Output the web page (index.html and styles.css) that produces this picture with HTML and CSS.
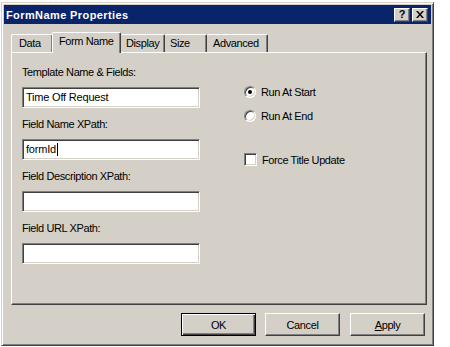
FILE: index.html
```html
<!DOCTYPE html>
<html lang="en">
<head>
    <meta charset="UTF-8">
    <title>FormName Properties</title>
    <link rel="stylesheet" href="styles.css">
</head>
<body>
    <div class="window">
        <div class="titlebar">
            <span class="title">FormName Properties</span>
            <div class="title-buttons">
                <span class="tbtn">?</span>
                <span class="tbtn close">
                    <svg width="8" height="7" viewBox="0 0 8 7">
                        <path d="M0 0h2l2 2.5 2-2.5h2l-3 3.5 3 3.5h-2l-2-2.5-2 2.5h-2l3-3.5z" fill="#000"/>
                    </svg>
                </span>
            </div>
        </div>

        <div class="tabs">
            <span class="tab tab-data">Data</span>
            <span class="tab tab-active">Form Name</span>
            <span class="tab tab-display">Display</span>
            <span class="tab tab-size">Size</span>
            <span class="tab tab-adv">Advanced</span>
        </div>

        <div class="panel">
            <div class="col-left">
                <label class="field-label">Template Name &amp; Fields:</label>
                <div class="textbox">Time Off Request</div>

                <label class="field-label">Field Name XPath:</label>
                <div class="textbox">formId<span class="caret"></span></div>

                <label class="field-label">Field Description XPath:</label>
                <div class="textbox"></div>

                <label class="field-label">Field URL XPath:</label>
                <div class="textbox"></div>
            </div>

            <div class="col-right">
                <div class="option"><span class="radio checked"></span>Run At Start</div>
                <div class="option"><span class="radio"></span>Run At End</div>
                <div class="option option-check"><span class="checkbox"></span>Force Title Update</div>
            </div>
        </div>

        <div class="actions">
            <span class="btn btn-default"><span>OK</span></span>
            <span class="btn"><span>Cancel</span></span>
            <span class="btn btn-apply"><span><u>A</u>pply</span></span>
        </div>
    </div>
</body>
</html>
```

FILE: styles.css
```css
body {
    margin: 0;
    background-color: #ffffff;
    font-family: "Liberation Sans", Arial, sans-serif;
    font-size: 11px;
    letter-spacing: -0.4px;
    color: #000;
}

.window {
    box-sizing: border-box;
    width: 433px;
    height: 344px;
    margin: 2px 0 0 1px;
    padding: 1px;
    background-color: #d4d0c8;
    border: 1px solid;
    border-color: #d4d0c8 #404040 #404040 #d4d0c8;
    box-shadow: inset 1px 1px 0 #ffffff, inset -1px -1px 0 #808080;
    display: flex;
    flex-direction: column;
}

.titlebar {
    height: 19px;
    margin: 1px 1px 0 1px;
    background-color: #0a246a;
    display: flex;
    align-items: center;
    justify-content: space-between;
    padding: 0 3px 0 2px;
}

.title {
    color: #fff;
    font-weight: bold;
    letter-spacing: 0.4px;
}

.title-buttons {
    display: flex;
}

.tbtn {
    box-sizing: border-box;
    width: 16px;
    height: 14px;
    background-color: #d4d0c8;
    border: 1px solid;
    border-color: #ffffff #404040 #404040 #ffffff;
    box-shadow: inset -1px -1px 0 #808080;
    display: flex;
    align-items: center;
    justify-content: center;
    font-weight: bold;
    font-size: 11px;
    letter-spacing: 0;
    line-height: 1;
}

.close {
    margin-left: 2px;
}

/* tabs */
.tabs {
    display: flex;
    align-items: flex-end;
    height: 20px;
    margin: 8px 0 0 8px;
    position: relative;
    z-index: 1;
}

.tab {
    box-sizing: border-box;
    height: 18px;
    padding: 2px 0 0 7px;
    border-top: 1px solid #ffffff;
    border-left: 1px solid #ffffff;
    border-right: 1px solid #404040;
    box-shadow: inset -1px 0 0 #808080;
    border-radius: 2px 2px 0 0;
}

.tab-data { width: 42px; }
.tab-display { width: 44px; padding-left: 5px; border-left: none; }
.tab-size { width: 42px; padding-left: 5px; border-left: none; }
.tab-adv { width: 61px; padding-left: 6px; border-left: none; }

.tab-active {
    width: 69px;
    height: 21px;
    margin: 0 0 -1px -1px;
    padding: 2px 0 0 6px;
    background-color: #d4d0c8;
}

.panel {
    box-sizing: border-box;
    height: 253px;
    margin: 0 5px 0 8px;
    padding: 13px 0 0 10px;
    border: 1px solid;
    border-color: #ffffff #404040 #404040 #ffffff;
    box-shadow: inset -1px -1px 0 #808080;
    display: flex;
    gap: 44px;
}

.col-left {
    width: 178px;
    display: flex;
    flex-direction: column;
}

.field-label {
    height: 13px;
    line-height: 13px;
    margin-bottom: 8px;
}

.textbox {
    box-sizing: border-box;
    height: 21px;
    margin-bottom: 10px;
    padding: 2px 0 0 3px;
    line-height: 15px;
    background-color: #ffffff;
    border: 1px solid;
    border-color: #808080 #ffffff #ffffff #808080;
    box-shadow: inset 1px 1px 0 #404040, inset -1px -1px 0 #d4d0c8;
    letter-spacing: -0.2px;
}

.caret {
    display: inline-block;
    width: 1px;
    height: 13px;
    margin-left: 1px;
    vertical-align: -3px;
    background-color: #000;
}

.col-right {
    padding-top: 19px;
    display: flex;
    flex-direction: column;
}

.option {
    display: flex;
    align-items: center;
    height: 13px;
    margin-bottom: 11px;
    gap: 5px;
}

.option-check {
    margin-top: 20px;
}

.radio {
    box-sizing: border-box;
    width: 12px;
    height: 12px;
    border-radius: 50%;
    background-color: #ffffff;
    border: 1px solid;
    border-color: #808080 #ffffff #ffffff #808080;
    box-shadow: inset 1px 1px 0 #404040, inset -1px -1px 0 #d4d0c8;
    display: flex;
    align-items: center;
    justify-content: center;
}

.radio.checked::after {
    content: "";
    width: 4px;
    height: 4px;
    border-radius: 50%;
    background-color: #000;
}

.checkbox {
    box-sizing: border-box;
    width: 13px;
    height: 13px;
    background-color: #ffffff;
    border: 1px solid;
    border-color: #808080 #ffffff #ffffff #808080;
    box-shadow: inset 1px 1px 0 #404040, inset -1px -1px 0 #d4d0c8;
}

/* bottom buttons */
.actions {
    display: flex;
    justify-content: flex-end;
    gap: 9px;
    margin: 8px 7px 0 0;
}

.btn {
    box-sizing: border-box;
    width: 75px;
    height: 23px;
    border: 1px solid;
    border-color: #ffffff #404040 #404040 #ffffff;
    box-shadow: inset -1px -1px 0 #808080;
    display: flex;
    align-items: center;
    justify-content: center;
}

.btn-default {
    border: 1px solid #000;
    box-shadow: inset 1px 1px 0 #ffffff, inset -1px -1px 0 #404040, inset -2px -2px 0 #808080;
}

.btn-apply {
    margin-left: 1px;
}
```
